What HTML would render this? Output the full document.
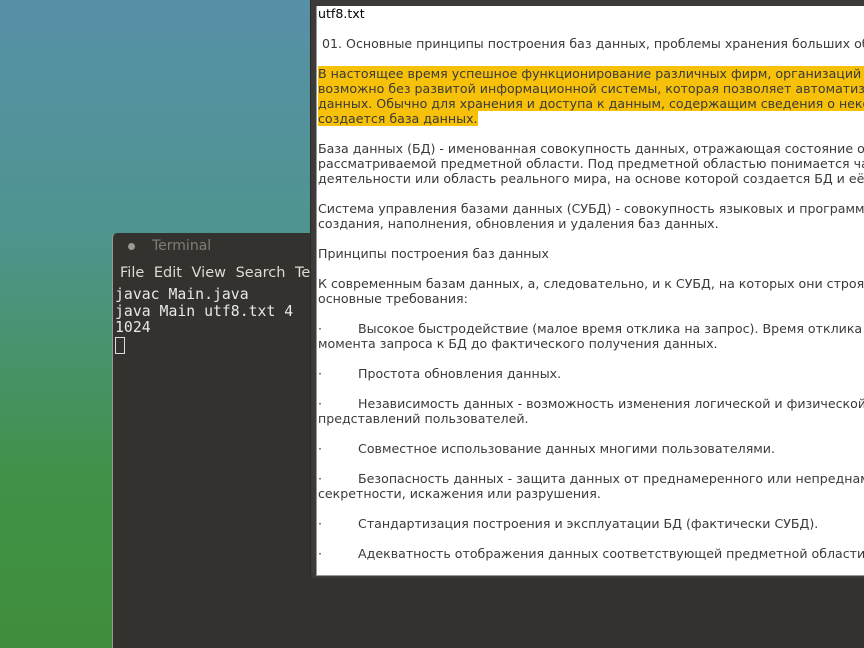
<!DOCTYPE html>
<html><head><meta charset="utf-8"><style>
*{margin:0;padding:0}
html,body{width:864px;height:648px;overflow:hidden}
body{position:relative;background:linear-gradient(#5890a8 0%,#4f9490 35%,#3f9246 75%,#408d3c 100%);font-family:"DejaVu Sans","Liberation Sans",sans-serif}
#term{position:absolute;left:112px;top:233px;width:760px;height:415px;background:#33322e;border-left:1px solid #9a9a92;border-radius:5px 0 0 0}
#tt{height:27px;line-height:27px;color:#7f7e79;font-size:14px;padding-left:39px;position:relative}
#tt:before{content:"";position:absolute;left:15px;top:10px;width:7px;height:7px;border-radius:50%;background:#9a9994}
#menu{height:24px;line-height:26px;color:#dfdbd2;font-size:14.5px;padding-left:7px;word-spacing:5px}
#tx{font-family:"DejaVu Sans Mono","Liberation Mono",monospace;font-size:14.8px;line-height:16.5px;color:#e8e8e8;padding-left:2px;padding-top:3px;white-space:pre}
.cur{display:inline-block;width:10px;height:17px;border:1px solid #ddd;box-sizing:border-box;vertical-align:top}
#ed{position:absolute;left:310px;top:0;width:560px;height:578px;background:#3c3b37;border-left:1px solid #2a2a28}
#pg{position:absolute;left:5px;top:6px;right:0;bottom:2px;background:#fff;border-left:1px solid #999;border-bottom:1px solid #999;padding-left:1px;font-size:12.6px;line-height:15px;color:#3a3a3a;white-space:pre;overflow:hidden}
.h{background:#f7c10a}
</style></head><body>
<div id="term"><div id="tt">Terminal</div><div id="menu">File Edit View Search Terminal</div>
<div id="tx">javac Main.java
java Main utf8.txt 4
1024
<span class="cur"></span></div></div>
<div id="ed"><div id="pg"><span style="color:#000">utf8.txt</span>

 01. Основные принципы построения баз данных, проблемы хранения больших объёмов

<span class="h">В настоящее время успешное функционирование различных фирм, организаций и пре</span>
<span class="h">возможно без развитой информационной системы, которая позволяет автоматизиро</span>
<span class="h">данных. Обычно для хранения и доступа к данным, содержащим сведения о некотор</span>
<span class="h">создается база данных.</span>

База данных (БД) - именованная совокупность данных, отражающая состояние объе
рассматриваемой предметной области. Под предметной областью понимается часть
деятельности или область реального мира, на основе которой создается БД и её

Система управления базами данных (СУБД) - совокупность языковых и программных
создания, наполнения, обновления и удаления баз данных.

Принципы построения баз данных

К современным базам данных, а, следовательно, и к СУБД, на которых они строятся
основные требования:

·         Высокое быстродействие (малое время отклика на запрос). Время отклика -
момента запроса к БД до фактического получения данных.

·         Простота обновления данных.

·         Независимость данных - возможность изменения логической и физической с
представлений пользователей.

·         Совместное использование данных многими пользователями.

·         Безопасность данных - защита данных от преднамеренного или непреднамер
секретности, искажения или разрушения.

·         Стандартизация построения и эксплуатации БД (фактически СУБД).

·         Адекватность отображения данных соответствующей предметной области.
</div></div>
</body></html>
